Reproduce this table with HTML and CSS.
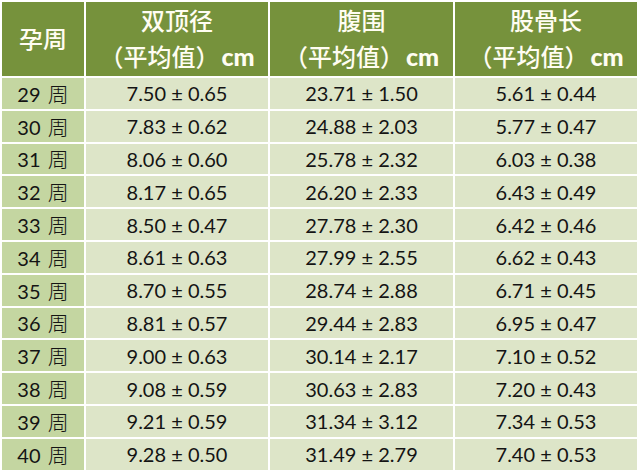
FILE: index.html
```html
<!DOCTYPE html>
<html lang="zh">
<head>
<meta charset="utf-8">
<link rel="stylesheet" href="styles.css">
</head>
<body>
<table class="fetal">
<colgroup>
<col class="c-week"><col class="c-val"><col class="c-val2"><col class="c-val">
</colgroup>
<thead>
<tr>
<th class="h-week">孕周</th>
<th><span class="h-line">双顶径</span><span class="h-line">（平均值）<b class="unit">cm</b></span></th>
<th><span class="h-line">腹围</span><span class="h-line">（平均值）<b class="unit">cm</b></span></th>
<th><span class="h-line">股骨长</span><span class="h-line">（平均值）<b class="unit">cm</b></span></th>
</tr>
</thead>
<tbody>
<tr><td class="wk">29 <span class="zh">周</span></td><td>7.50 ± 0.65</td><td>23.71 ± 1.50</td><td>5.61 ± 0.44</td></tr>
<tr><td class="wk">30 <span class="zh">周</span></td><td>7.83 ± 0.62</td><td>24.88 ± 2.03</td><td>5.77 ± 0.47</td></tr>
<tr><td class="wk">31 <span class="zh">周</span></td><td>8.06 ± 0.60</td><td>25.78 ± 2.32</td><td>6.03 ± 0.38</td></tr>
<tr><td class="wk">32 <span class="zh">周</span></td><td>8.17 ± 0.65</td><td>26.20 ± 2.33</td><td>6.43 ± 0.49</td></tr>
<tr><td class="wk">33 <span class="zh">周</span></td><td>8.50 ± 0.47</td><td>27.78 ± 2.30</td><td>6.42 ± 0.46</td></tr>
<tr><td class="wk">34 <span class="zh">周</span></td><td>8.61 ± 0.63</td><td>27.99 ± 2.55</td><td>6.62 ± 0.43</td></tr>
<tr><td class="wk">35 <span class="zh">周</span></td><td>8.70 ± 0.55</td><td>28.74 ± 2.88</td><td>6.71 ± 0.45</td></tr>
<tr><td class="wk">36 <span class="zh">周</span></td><td>8.81 ± 0.57</td><td>29.44 ± 2.83</td><td>6.95 ± 0.47</td></tr>
<tr><td class="wk">37 <span class="zh">周</span></td><td>9.00 ± 0.63</td><td>30.14 ± 2.17</td><td>7.10 ± 0.52</td></tr>
<tr><td class="wk">38 <span class="zh">周</span></td><td>9.08 ± 0.59</td><td>30.63 ± 2.83</td><td>7.20 ± 0.43</td></tr>
<tr><td class="wk">39 <span class="zh">周</span></td><td>9.21 ± 0.59</td><td>31.34 ± 3.12</td><td>7.34 ± 0.53</td></tr>
<tr><td class="wk">40 <span class="zh">周</span></td><td>9.28 ± 0.50</td><td>31.49 ± 2.79</td><td>7.40 ± 0.53</td></tr>
</tbody>
</table>
</body>
</html>
```
FILE: styles.css
```css
html, body {
  margin: 0;
  padding: 0;
  background: #ffffff;
}
.fetal {
  table-layout: fixed;
  width: 639px;
  border-collapse: separate;
  border-spacing: 2px;
  background: #ffffff;
  font-family: Lato, "Noto Sans CJK SC", sans-serif;
}
.c-week { width: 82px; }
.c-val { width: 182px; }
.c-val2 { width: 183px; }
.fetal th, .fetal td {
  padding: 0;
  text-align: center;
  vertical-align: middle;
}
.fetal thead tr { height: 74px; }
.fetal th {
  background: #76923c;
  color: #fffdf2;
  font-family: "Noto Sans CJK SC", sans-serif;
  font-size: 24px;
  font-weight: 500;
  padding-bottom: 2px;
}
.h-line {
  display: block;
  line-height: 36px;
}
.unit {
  font-family: Lato, sans-serif;
  font-size: 25px;
  font-weight: 900;
  margin-left: 2px;
}
.h-week { line-height: 30px; padding-bottom: 4px; }
.fetal tbody tr { height: 30.8px; }
.fetal td {
  background: #dde5c8;
  color: #141414;
  font-size: 20px;
  line-height: 24px;
}
.fetal td.wk {
  background: #c4d6a1;
}
.zh {
  font-family: "Noto Sans CJK SC", sans-serif;
  font-size: 21px;
  font-weight: 300;
  margin-left: 2px;
}
```
